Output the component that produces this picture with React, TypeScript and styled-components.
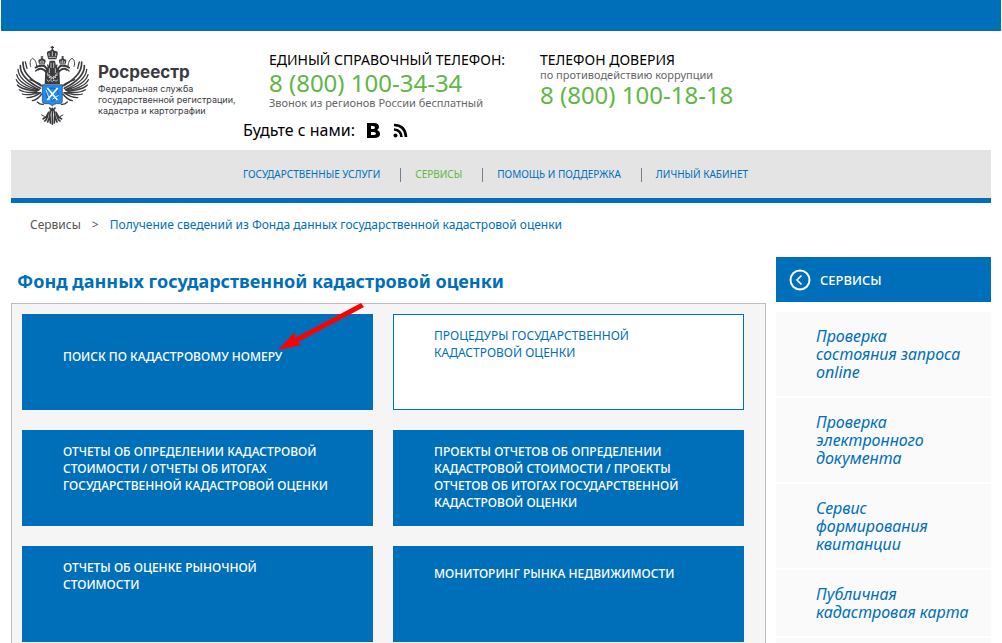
import React from "react";
import styled, { createGlobalStyle } from "styled-components";

const blue = "#006fb9";
const green = "#60b647";

const GlobalStyle = createGlobalStyle`
  *, *::before, *::after { box-sizing: border-box; }
  body { margin: 0; background: #fff; font-family: "Noto Sans", "Open Sans", sans-serif; color: #000; }
  a { color: inherit; text-decoration: none; }
  ul, ol { margin: 0; padding: 0; list-style: none; }
  p, h1, h2 { margin: 0; }
`;

const Page = styled.div`
  height: 100vh;
  overflow: hidden;
`;
const TopBar = styled.div`
  height: 31px;
  margin: 0 1px;
  background: ${blue};
`;
const Content = styled.div`
  margin: 0 11px;
`;
const Header = styled.header`
  display: flex;
  height: 119px;
`;
const Brand = styled.a`
  display: flex;
  width: 232px;
  flex: none;
  padding-top: 9px;
  color: #3b3b3f;
  font-family: Inter, "Open Sans", sans-serif;
`;
const Emblem = styled.svg`
  width: 84px;
  height: 90px;
  flex: none;
`;
const BrandText = styled.span`
  display: block;
  padding: 21px 0 0 3px;
  font-size: 9px;
  line-height: 11px;
  font-weight: 400;
  white-space: nowrap;
`;
const BrandName = styled.strong`
  display: block;
  font-size: 17px;
  line-height: 22px;
  font-weight: 700;
`;
const Contacts = styled.div`
  flex: 1;
  padding-top: 20px;
`;
const Phones = styled.div`
  display: flex;
  padding-left: 26px;
`;
const PhoneBlock = styled.div`
  width: 271px;
`;
const PhoneTitle = styled.p`
  font-size: 14px;
  line-height: 18px;
`;
const PhoneNumber = styled.a`
  display: block;
  color: ${green};
  font-size: 24px;
  line-height: 28px;
`;
const PhoneNote = styled.p`
  color: #666;
  font-size: 11px;
  line-height: 12px;
`;
const Social = styled.div`
  display: flex;
  align-items: center;
  height: 24px;
  margin-top: 9px;
  font-size: 16px;
`;
const SocialLink = styled.a`
  display: flex;
  margin-left: 12px;
`;
const Nav = styled.nav`
  height: 53px;
  padding-left: 232px;
  background: #e4e4e4;
  border-bottom: 5px solid ${blue};
`;
const NavList = styled.ul`
  display: flex;
  align-items: center;
  height: 48px;
`;
const NavItem = styled.li`
  display: flex;
  align-items: center;
  & + &::before {
    content: "";
    width: 1px;
    height: 14px;
    margin: 2px 14px 0 20px;
    background: #6f7f95;
  }
`;
const NavLink = styled.a<{ $active?: boolean }>`
  font-size: 10px;
  line-height: 16px;
  color: ${(p) => (p.$active ? green : blue)};
`;
const Crumbs = styled.ol`
  display: flex;
  height: 42px;
  align-items: center;
  padding-left: 19px;
  font-size: 12px;
  color: ${blue};
`;
const Crumb = styled.li`
  & + &::before {
    content: ">";
    margin: 0 11px;
    color: #555;
  }
`;
const CrumbLink = styled.a<{ $root?: boolean }>`
  color: ${(p) => (p.$root ? "#555" : blue)};
`;
const Columns = styled.div`
  display: flex;
  gap: 10px;
  align-items: flex-start;
  padding-top: 12px;
`;
const Main = styled.main`
  flex: 1;
`;
const Title = styled.h1`
  height: 46px;
  padding: 10px 0 0 6px;
  color: ${blue};
  font-size: 18px;
  line-height: 28px;
`;
const Panel = styled.section`
  position: relative;
  padding: 10px 21px 20px 10px;
  border: 1px solid #bdbdbd;
  background: #f5f5f5;
`;
const Tiles = styled.div`
  display: grid;
  grid-template-columns: 1fr 1fr;
  grid-auto-rows: 96px;
  gap: 20px;
`;
const Tile = styled.a<{ $outlined?: boolean; $drop?: number }>`
  padding: ${(p) => p.$drop ?? 12}px 40px 0;
  border: 1px solid ${blue};
  background: ${(p) => (p.$outlined ? "#fff" : blue)};
  color: ${(p) => (p.$outlined ? blue : "#fff")};
  font-size: 12px;
  line-height: 17px;
  font-weight: ${(p) => (p.$outlined ? 400 : 500)};
`;
const Line = styled.span`
  display: block;
  white-space: nowrap;
`;
const Pointer = styled.svg`
  position: absolute;
  left: 262px;
  top: -4px;
  width: 94px;
  height: 54px;
  pointer-events: none;
`;
const Aside = styled.aside`
  width: 215px;
  flex: none;
`;
const AsideTitle = styled.h2`
  display: flex;
  align-items: center;
  gap: 9px;
  height: 45px;
  margin-bottom: 10px;
  padding-left: 13px;
  background: ${blue};
  color: #fff;
  font-size: 13px;
  font-weight: 500;
`;
const AsideList = styled.ul`
  display: grid;
  gap: 2px;
`;
const AsideItem = styled.li`
  min-height: 66px;
  padding: 15px 10px 15px 40px;
  background: #fafafa;
  color: ${blue};
  font-size: 16px;
  line-height: 18px;
  font-style: italic;
`;

function Wing() {
  return (
    <g fill="none" stroke="#3b3b3f" strokeLinecap="round">
      <path strokeWidth="5" d="M39 66C38 92 52 112 92 137M31 77C30 102 49 123 91 145" />
      <path strokeWidth="4" d="M24 88C25 113 48 132 88 149M20 104C25 124 48 139 86 151" />
      <path strokeWidth="4" d="M19 119C28 138 52 146 84 152M22 135C33 149 58 150 80 155" />
      <path strokeWidth="4" d="M28 149C43 160 63 156 82 158M37 162C52 168 68 162 88 158M51 173C67 174 78 168 92 158" />
      <path strokeWidth="4" d="M67 182C78 180 88 172 95 162M46 66L51 85M60 119C76 126 84 126 96 138" />
      <path strokeWidth="4" d="M82 186C86 190 92 194 100 193" />
      <path strokeWidth="3" d="M62 79C58 69 61 58 68 55C78 61 80 72 80 81" />
      <path strokeWidth="6" d="M77 83C84 76 94 77 103 78L113 89M84 89C94 82 104 90 113 101" />
      <path strokeWidth="4" d="M83 88L77 93M113 75L118 88" />
    </g>
  );
}

function SmallCrown() {
  return (
    <g>
      <path fill="#3b3b3f" d="M85 64Q84 57 91 58Q92 54 96 54Q100 54 101 58Q108 57 107 64L104 74H88Z" />
      <path stroke="#3b3b3f" strokeWidth="3" d="M96 48V55M92 51H100" />
      <path stroke="#fff" strokeWidth="2" fill="none" d="M91 63V69M96 60V69M101 63V69M88 72H104" />
    </g>
  );
}

function Eagle() {
  return (
    <Emblem viewBox="3 0 252 270" aria-hidden="true">
      <Wing />
      <g transform="translate(254 0) scale(-1 1)"><Wing /></g>
      <SmallCrown />
      <g transform="translate(254 0) scale(-1 1)"><SmallCrown /></g>
      <path stroke="#3b3b3f" strokeWidth="4" d="M127 18V29M122 22H132" />
      <path fill="#3b3b3f" d="M111 43Q109 32 120 33Q123 28 127 28Q131 28 134 33Q145 32 143 43L139 58H115Z" />
      <path fill="none" stroke="#fff" strokeWidth="2" d="M117 39V48M127 34V48M137 39V48M116 52H138" />
      <path fill="#3b3b3f" d="M119 62H135L138 78L148 90L150 132H104L106 90L116 78Z" />
      <path fill="none" stroke="#fff" strokeWidth="2" d="M113 98V107L118 104V114L123 108V118L127 112L131 118V108L136 114V104L141 107V98M110 119L116 124L122 120L127 125L132 120L138 124L144 119M123 68V84M131 68V84M118 85V99M136 85V99" />
      <path fill="#1e8cf0" stroke="#3b3b3f" strokeWidth="2" d="M97 134H157V184Q157 191 149 191H139Q131 192 127 198Q123 192 115 191H105Q97 191 97 184Z" />
      <circle cx="127" cy="162" r="18" fill="none" stroke="#1f6cb0" strokeWidth="4" />
      <path stroke="#fff" strokeWidth="5" d="M112 144L142 180M143 144L112 180" />
      <path stroke="#d9e9f8" strokeWidth="3" d="M108 150L120 181M127 178L146 166" />
      <g fill="none" stroke="#3b3b3f" strokeLinecap="round" strokeWidth="5">
        <path d="M119 204L127 213L135 204M127 205V253M121 213Q120 233 113 246M133 213Q134 233 141 246M120 229L121 249M134 229L133 249" />
        <path d="M116 217Q111 231 99 237M138 217Q143 231 155 237M114 223Q111 240 104 243M140 223Q143 240 150 243" />
        <path strokeWidth="3" d="M103 229L95 225M151 229L159 225" />
      </g>
    </Emblem>
  );
}

const tiles: { lines: string[]; outlined?: boolean; drop?: number }[] = [
  { lines: ["ПОИСК ПО КАДАСТРОВОМУ НОМЕРУ"], drop: 33 },
  { lines: ["ПРОЦЕДУРЫ ГОСУДАРСТВЕННОЙ", "КАДАСТРОВОЙ ОЦЕНКИ"], outlined: true },
  { lines: ["ОТЧЕТЫ ОБ ОПРЕДЕЛЕНИИ КАДАСТРОВОЙ", "СТОИМОСТИ / ОТЧЕТЫ ОБ ИТОГАХ", "ГОСУДАРСТВЕННОЙ КАДАСТРОВОЙ ОЦЕНКИ"] },
  { lines: ["ПРОЕКТЫ ОТЧЕТОВ ОБ ОПРЕДЕЛЕНИИ", "КАДАСТРОВОЙ СТОИМОСТИ / ПРОЕКТЫ", "ОТЧЕТОВ ОБ ИТОГАХ ГОСУДАРСТВЕННОЙ", "КАДАСТРОВОЙ ОЦЕНКИ"] },
  { lines: ["ОТЧЕТЫ ОБ ОЦЕНКЕ РЫНОЧНОЙ", "СТОИМОСТИ"] },
  { lines: ["МОНИТОРИНГ РЫНКА НЕДВИЖИМОСТИ"], drop: 18 },
];

const services = [
  ["Проверка", "состояния запроса", "online"],
  ["Проверка", "электронного", "документа"],
  ["Сервис", "формирования", "квитанции"],
  ["Публичная", "кадастровая карта"],
];

export default function App() {
  return (
    <Page>
      <GlobalStyle />
      <TopBar />
      <Content>
        <Header>
          <Brand href="#">
            <Eagle />
            <BrandText>
              <BrandName>Росреестр</BrandName>
              Федеральная служба<br />государственной регистрации,<br />кадастра и картографии
            </BrandText>
          </Brand>
          <Contacts>
            <Phones>
              <PhoneBlock>
                <PhoneTitle>ЕДИНЫЙ СПРАВОЧНЫЙ ТЕЛЕФОН:</PhoneTitle>
                <PhoneNumber href="tel:88001003434">8 (800) 100-34-34</PhoneNumber>
                <PhoneNote>Звонок из регионов России бесплатный</PhoneNote>
              </PhoneBlock>
              <PhoneBlock>
                <PhoneTitle>ТЕЛЕФОН ДОВЕРИЯ</PhoneTitle>
                <PhoneNote>по противодействию коррупции</PhoneNote>
                <PhoneNumber href="tel:88001001818">8 (800) 100-18-18</PhoneNumber>
              </PhoneBlock>
            </Phones>
            <Social>
              Будьте с нами:
              <SocialLink href="#" aria-label="ВКонтакте">
                <svg width="14" height="15" viewBox="0 0 14 15" aria-hidden="true">
                  <path fillRule="evenodd" d="M0 0H7Q12 0 12 4Q12 6 10 7Q13 8 13 11Q13 15 7 15H0ZM4 3V6H6Q8 6 8 4.500Q8 3 6 3ZM4 9V12H6.500Q9 12 9 10.500Q9 9 6.500 9Z" />
                </svg>
              </SocialLink>
              <SocialLink href="#" aria-label="RSS">
                <svg width="15" height="15" viewBox="0 0 15 15" aria-hidden="true">
                  <circle cx="2.500" cy="12.500" r="2" />
                  <path fill="none" stroke="#000" strokeWidth="2.600" d="M1 6.500Q8 7 8.500 14M1 2Q12.500 2.500 13 14" />
                </svg>
              </SocialLink>
            </Social>
          </Contacts>
        </Header>
        <Nav>
          <NavList>
            <NavItem><NavLink href="#">ГОСУДАРСТВЕННЫЕ УСЛУГИ</NavLink></NavItem>
            <NavItem><NavLink href="#" $active>СЕРВИСЫ</NavLink></NavItem>
            <NavItem><NavLink href="#">ПОМОЩЬ И ПОДДЕРЖКА</NavLink></NavItem>
            <NavItem><NavLink href="#">ЛИЧНЫЙ КАБИНЕТ</NavLink></NavItem>
          </NavList>
        </Nav>
        <Crumbs>
          <Crumb><CrumbLink href="#" $root>Сервисы</CrumbLink></Crumb>
          <Crumb><CrumbLink href="#">Получение сведений из Фонда данных государственной кадастровой оценки</CrumbLink></Crumb>
        </Crumbs>
        <Columns>
          <Main>
            <Title>Фонд данных государственной кадастровой оценки</Title>
            <Panel>
              <Tiles>
                {tiles.map((t) => (
                  <Tile href="#" key={t.lines[0]} $outlined={t.outlined} $drop={t.drop}>
                    {t.lines.map((l) => <Line key={l}>{l}</Line>)}
                  </Tile>
                ))}
              </Tiles>
              <Pointer viewBox="0 0 94 54" aria-hidden="true">
                <path fill="#f00" d="M87 3L90 7L24 42L27 45L4 50L21 32V38Z" />
              </Pointer>
            </Panel>
          </Main>
          <Aside>
            <AsideTitle>
              <svg width="22" height="22" viewBox="0 0 22 22" fill="none" stroke="#fff" strokeWidth="2" aria-hidden="true">
                <circle cx="11" cy="11" r="9.500" />
                <path strokeWidth="1.600" d="M12.500 6.500L8 11L12.500 15.500" />
              </svg>
              СЕРВИСЫ
            </AsideTitle>
            <AsideList>
              {services.map((s) => (
                <AsideItem key={s[1]}>
                  <a href="#">{s.map((l) => <Line key={l}>{l}</Line>)}</a>
                </AsideItem>
              ))}
              <AsideItem aria-hidden="true" />
            </AsideList>
          </Aside>
        </Columns>
      </Content>
    </Page>
  );
}
